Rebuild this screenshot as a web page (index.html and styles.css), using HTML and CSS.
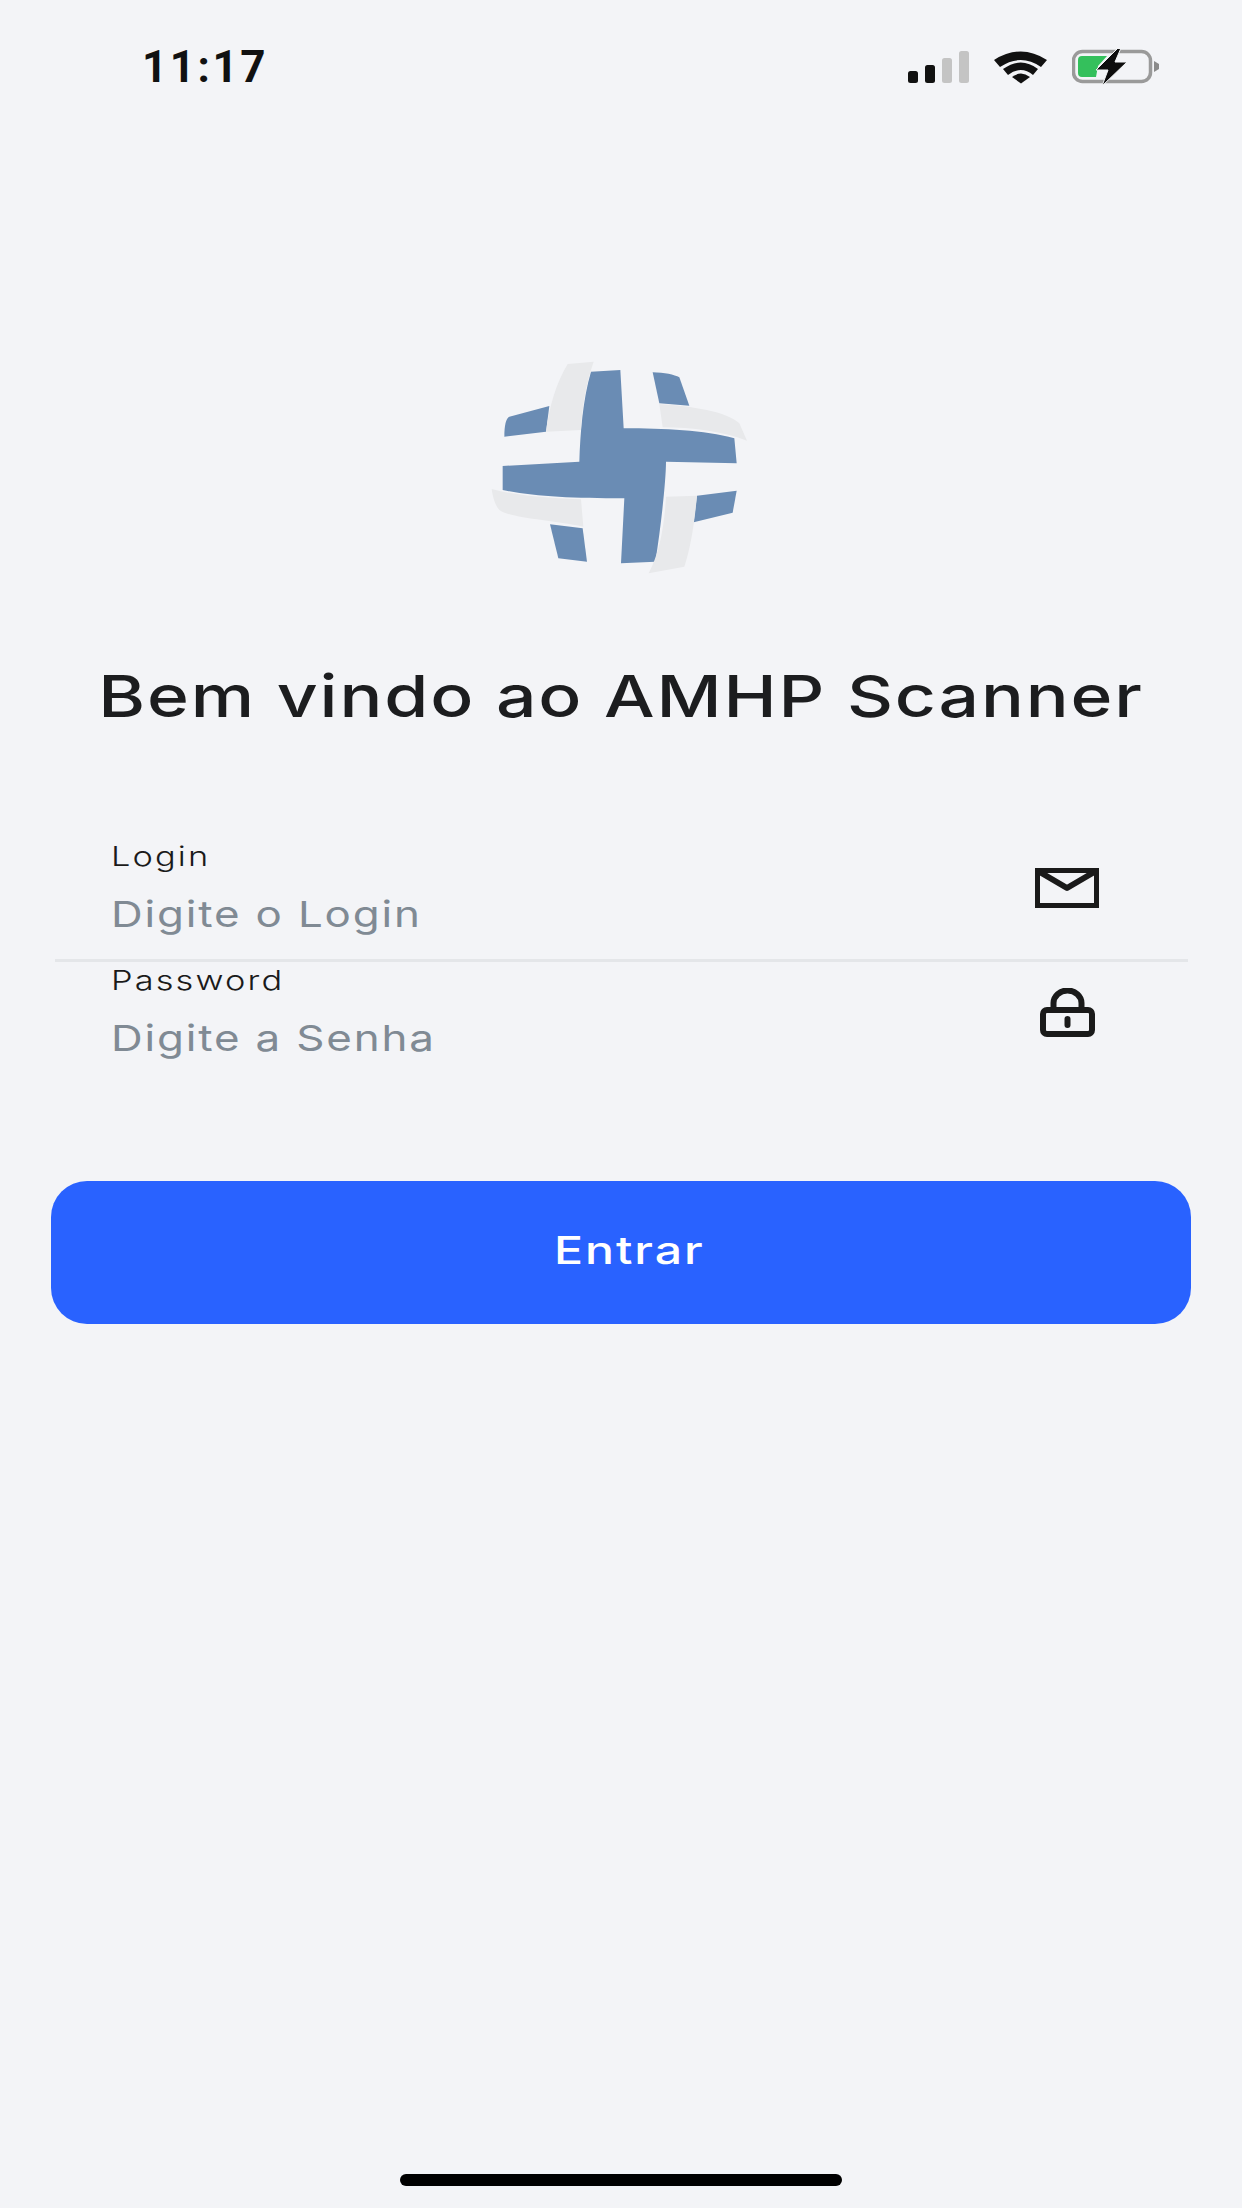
FILE: index.html
```html
<!DOCTYPE html>
<html lang="pt">
<head>
<meta charset="utf-8">
<title>AMHP Scanner</title>
<link rel="stylesheet" href="styles.css">
</head>
<body>
<div class="screen">
  <header class="status">
    <span class="time">11:17</span>
    <div class="status-icons">
      <svg class="signal" width="62" height="32" viewBox="0 0 62 32"><rect x="0" y="20" width="10" height="12" rx="2.5" fill="#111"/><rect x="17" y="14" width="10" height="18" rx="2.5" fill="#111"/><rect x="34" y="7" width="10" height="25" rx="2.5" fill="#c4c4c4"/><rect x="51" y="0" width="10" height="32" rx="2.5" fill="#c4c4c4"/></svg>
      <svg class="wifi" width="54" height="33" viewBox="0 0 54 33"><g fill="#111"><path d="M0 9 Q27 -8 53 9 L47 16 Q27 2 6 16Z"/><path d="M9 18 Q27 5 44 18 L39 24 Q27 14 14 24Z"/><path d="M18 26 Q27 19 36 26 L27 32.500Z"/></g></svg>
      <svg class="battery" width="88" height="36" viewBox="0 0 88 36"><rect x="1.500" y="2.500" width="77" height="30" rx="9" fill="none" stroke="#9a9a9a" stroke-width="3.500"/><path d="M6 11 a4 4 0 0 1 4-4 H35 L26 17 L24 28 H10 a4 4 0 0 1-4-4Z" fill="#34c05c"/><path d="M82 12 L87 15 V20 L82 23Z" fill="#8a8a8a"/><path d="M46 -1 L24 21 H36 L30 37 L55 13 H43 L49 -1Z" fill="#0d0d0d" stroke="#f3f5f7" stroke-width="1"/></svg>
    </div>
  </header>

  <div class="logo-wrap">
    <svg class="logo" width="300" height="250" viewBox="0 0 900 750">
      <g fill="#6a8cb4">
        <path d="M100 290 C100 255 105 235 115 230 L235 198 L225 275Z"/>
        <path d="M545 97 C580 98 610 104 625 112 L655 197 L565 190Z"/>
        <path d="M237 553 L335 565 L348 665 L262 655Z"/>
        <path d="M678 467 L797 452 L785 518 L668 547Z"/>
        <path d="M360 95 L448 90 L458 265 C580 265 700 270 790 295 L797 370 L585 365 C585 420 570 560 553 665 L450 670 L460 475 C300 475 190 470 95 450 L95 378 L325 365 C328 280 335 180 360 95Z"/>
      </g>
      <g fill="#e8e9eb">
        <path d="M290 72 L368 65 C345 130 332 210 330 270 L225 275 C235 200 255 130 290 72Z"/>
        <path d="M565 192 C660 198 770 215 805 250 L828 302 C760 275 660 262 575 262Z"/>
        <path d="M62 447 C150 470 250 475 330 478 L337 560 C240 540 120 535 85 510 C72 495 65 470 62 447Z"/>
        <path d="M585 470 L678 467 C670 550 660 620 640 680 L533 700 C565 640 580 560 585 470Z"/>
      </g>
    </svg>
  </div>

  <h1 class="title"><span class="title-text">Bem vindo ao AMHP Scanner</span></h1>

  <form class="form">
    <div class="field field-login">
      <div class="field-text">
        <label class="label">Login</label>
        <span class="placeholder">Digite o Login</span>
      </div>
      <div class="field-icon">
        <svg width="64" height="40" viewBox="0 0 64 40"><rect x="2.500" y="2.500" width="59" height="35" fill="none" stroke="#1a1a1a" stroke-width="5"/><path d="M3 3 L32 20 L61 3" fill="none" stroke="#1a1a1a" stroke-width="6" stroke-linejoin="round"/></svg>
      </div>
    </div>
    <div class="field field-pass">
      <div class="field-text">
        <label class="label">Password</label>
        <span class="placeholder">Digite a Senha</span>
      </div>
      <div class="field-icon">
        <svg width="55" height="49" viewBox="0 0 55 49"><rect x="3" y="22" width="49" height="24" rx="4" fill="none" stroke="#1a1a1a" stroke-width="6"/><path d="M13.500 22 V15 A14 12.500 0 0 1 41.500 15 V22" fill="none" stroke="#1a1a1a" stroke-width="6"/><rect x="24.500" y="28" width="6" height="12" rx="3" fill="#1a1a1a"/></svg>
      </div>
    </div>
  </form>

  <button class="submit" type="button"><span class="submit-text">Entrar</span></button>

  <div class="spacer"></div>
  <div class="home-indicator"></div>
</div>
</body>
</html>
```

FILE: styles.css
```css
* { box-sizing: border-box; }
html, body { margin: 0; padding: 0; }
body { background: #f3f4f7; }
.screen {
  width: 1242px;
  height: 2208px;
  display: flex;
  flex-direction: column;
  background: #f3f4f7;
  font-family: Inter, "Noto Sans", sans-serif;
  overflow: hidden;
}
.status {
  height: 130px;
  padding: 44px 82px 0 142px;
  display: flex;
  justify-content: space-between;
  align-items: flex-start;
}
.time {
  font-family: Roboto, "Liberation Sans", sans-serif;
  font-weight: 700;
  font-size: 44px;
  line-height: 46px;
  letter-spacing: 2.500px;
  color: #111;
}
.status-icons { display: flex; align-items: center; gap: 24px; height: 46px; }
.logo-wrap { display: flex; justify-content: center; margin-top: 210px; height: 250px; }
.logo { display: block; }
.title {
  margin: 70px 0 0;
  text-align: center;
  font-weight: 500;
  font-size: 58px;
  line-height: 72px;
  letter-spacing: 1.500px;
  color: #1c1d1f;
}
.title-text { display: inline-block; white-space: nowrap; transform: scaleX(1.23); }
.form { margin: 106px 54px 0 55px; }
.field {
  display: flex;
  justify-content: space-between;
  align-items: flex-start;
  padding: 0 88px 0 56px;
}
.field-login { height: 124px; border-bottom: 3px solid #e4e6e9; }
.field-pass { height: 124px; }
.field-text { display: flex; flex-direction: column; padding-top: 4px; align-items: flex-start; }
.field-icon {
  width: 66px;
  height: 50px;
  margin-top: 25px;
  display: flex;
  align-items: center;
  justify-content: center;
}
.label {
  font-weight: 300;
  font-size: 27.500px;
  line-height: 28px;
  letter-spacing: 1.700px;
  color: #1a1a1a;
  transform: scaleX(1.25);
  transform-origin: left center;
}
.placeholder {
  margin-top: 24px;
  font-size: 36px;
  line-height: 40px;
  letter-spacing: 1.500px;
  color: #808a94;
  transform: scaleX(1.22);
  transform-origin: left center;
}
.submit {
  display: block;
  margin: 95px 51px 0;
  height: 143px;
  padding: 0 0 5px 16px;
  border: 0;
  border-radius: 36px;
  background: #2962ff;
  color: #fff;
  font-family: Inter, sans-serif;
  font-weight: 500;
  font-size: 38px;
  letter-spacing: 1.500px;
}
.submit-text { display: inline-block; transform: scaleX(1.27); }
.spacer { flex: 1; }
.home-indicator {
  width: 442px;
  height: 12px;
  margin: 0 auto 22px;
  border-radius: 6px;
  background: #000;
}
```
